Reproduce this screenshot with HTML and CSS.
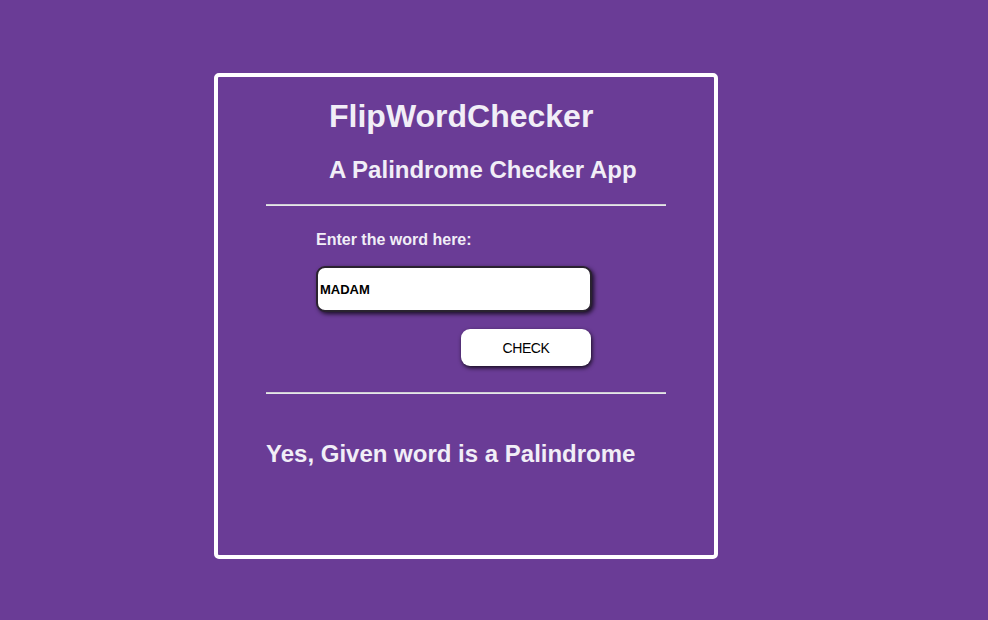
FILE: index.html
```html
<!DOCTYPE html>
<html lang="en">
<head>
<meta charset="utf-8">
<title>FlipWordChecker</title>
<link rel="stylesheet" href="styles.css">
</head>
<body>
<div class="card">
  <h1 class="title">FlipWordChecker</h1>
  <h2 class="subtitle">A Palindrome Checker App</h2>
  <hr class="rule">
  <div class="form">
    <label class="label" for="word">Enter the word here:</label>
    <input class="field" id="word" type="text" value="MADAM">
    <button class="check" type="button">CHECK</button>
  </div>
  <hr class="rule">
  <h2 class="result">Yes, Given word is a Palindrome</h2>
</div>
</body>
</html>
```
FILE: styles.css
```css
html, body {
  margin: 0;
  padding: 0;
  background: #6a3c96;
  font-family: "Liberation Sans", Arial, sans-serif;
  color: #f1eef7;
}
.card {
  width: 400px;
  height: 478px;
  margin: 73px 0 0 214px;
  padding: 0 48px;
  border: 4px solid #ffffff;
  border-radius: 5px;
  overflow: hidden;
}
.title {
  font-size: 32px;
  font-weight: bold;
  margin: 21px 0 0 63px;
  line-height: 37px;
}
.subtitle {
  font-size: 24px;
  font-weight: bold;
  margin: 21px 0 0 63px;
  line-height: 28px;
}
.rule {
  margin: 20px 0 0 0;
  border: 0;
  height: 2px;
  background: linear-gradient(#cfcfd4 0 1px, #e6e6ea 1px 2px);
}
.form {
  display: flex;
  flex-direction: column;
  align-items: flex-start;
  padding-left: 50px;
}
.label {
  font-size: 16px;
  font-weight: bold;
  line-height: 18px;
  margin-top: 25px;
}
.field {
  box-sizing: border-box;
  width: 276px;
  height: 46px;
  margin-top: 17px;
  padding: 0 2px;
  border: 2px solid #2a2330;
  border-radius: 9px;
  background: #fff;
  box-shadow: 2px 2px 4px rgba(0, 0, 0, 0.75);
  font-family: "Liberation Sans", Arial, sans-serif;
  font-size: 13px;
  font-weight: bold;
  color: #000;
  outline: none;
}
.check {
  box-sizing: border-box;
  width: 130px;
  height: 37px;
  margin: 17px 0 0 145px;
  border: 0;
  border-radius: 9px;
  background: #fff;
  box-shadow: 1px 2px 4px rgba(0, 0, 0, 0.8);
  font-family: "Liberation Sans", Arial, sans-serif;
  font-size: 14px;
  color: #000;
  letter-spacing: -0.4px;
}
.form + .rule {
  margin-top: 26px;
}
.result {
  font-size: 24px;
  font-weight: bold;
  line-height: 28px;
  margin: 46px 0 0 0;
}
```
